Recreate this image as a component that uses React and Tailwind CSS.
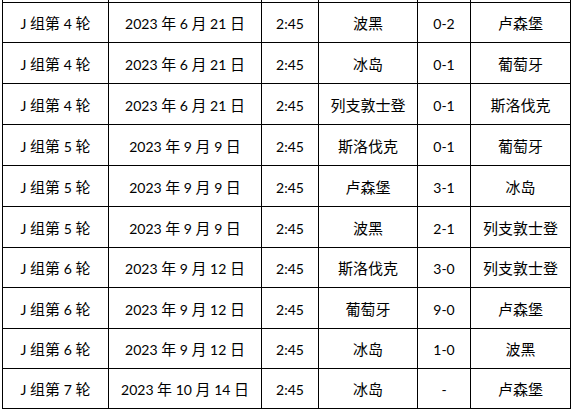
const rows = [
  ['J 组第 4 轮', '2023 年 6 月 21 日', '2:45', '波黑', '0-2', '卢森堡'],
  ['J 组第 4 轮', '2023 年 6 月 21 日', '2:45', '冰岛', '0-1', '葡萄牙'],
  ['J 组第 4 轮', '2023 年 6 月 21 日', '2:45', '列支敦士登', '0-1', '斯洛伐克'],
  ['J 组第 5 轮', '2023 年 9 月 9 日', '2:45', '斯洛伐克', '0-1', '葡萄牙'],
  ['J 组第 5 轮', '2023 年 9 月 9 日', '2:45', '卢森堡', '3-1', '冰岛'],
  ['J 组第 5 轮', '2023 年 9 月 9 日', '2:45', '波黑', '2-1', '列支敦士登'],
  ['J 组第 6 轮', '2023 年 9 月 12 日', '2:45', '斯洛伐克', '3-0', '列支敦士登'],
  ['J 组第 6 轮', '2023 年 9 月 12 日', '2:45', '葡萄牙', '9-0', '卢森堡'],
  ['J 组第 6 轮', '2023 年 9 月 12 日', '2:45', '冰岛', '1-0', '波黑'],
  ['J 组第 7 轮', '2023 年 10 月 14 日', '2:45', '冰岛', '-', '卢森堡'],
]

// row pitch including the bottom border
const heights = ['h-[40px]', 'h-[41px]', 'h-[41px]', 'h-[41px]', 'h-[41px]', 'h-[41px]', 'h-[40px]', 'h-[41px]', 'h-[40px]', 'h-[40px]']

const cols = ['w-[106px]', 'w-[153px]', 'w-[57px]', 'w-[99px]', 'w-[53px]', 'w-[100px]']

// CJK and Latin runs get different fonts so the widths line up with the original
function MixedText({ text }) {
  const parts = text.split(/([\u4e00-\u9fff]+)/).filter(Boolean)
  return (
    <span className="whitespace-pre">
      {parts.map((p, i) =>
        /[\u4e00-\u9fff]/.test(p) ? (
          <span key={i} className="text-[15px] font-['Noto_Sans_CJK_SC',sans-serif]">{p}</span>
        ) : (
          <span key={i} className="text-[14px] font-['Lato','Noto_Sans_CJK_SC',sans-serif]">{p}</span>
        )
      )}
    </span>
  )
}

function Row({ cells, height }) {
  return (
    <div className={`flex border-b border-black ${height}`}>
      {cells.map((c, i) => (
        <div key={i} className={`${cols[i]} shrink-0 border-r border-black flex items-center justify-center text-black leading-none pt-[1px]`}>
          {c && <MixedText text={c} />}
        </div>
      ))}
    </div>
  )
}

export default function App() {
  return (
    <div className="w-[573px] h-[411px] bg-white overflow-hidden">
      <div className="ml-[2px] w-[569px] border-l border-black">
        {/* tail of the previous row, cut off by the top edge */}
        <Row cells={['', '', '', '', '', '']} height="h-[3px]" />
        {rows.map((r, i) => (
          <Row key={i} cells={r} height={heights[i]} />
        ))}
      </div>
    </div>
  )
}
